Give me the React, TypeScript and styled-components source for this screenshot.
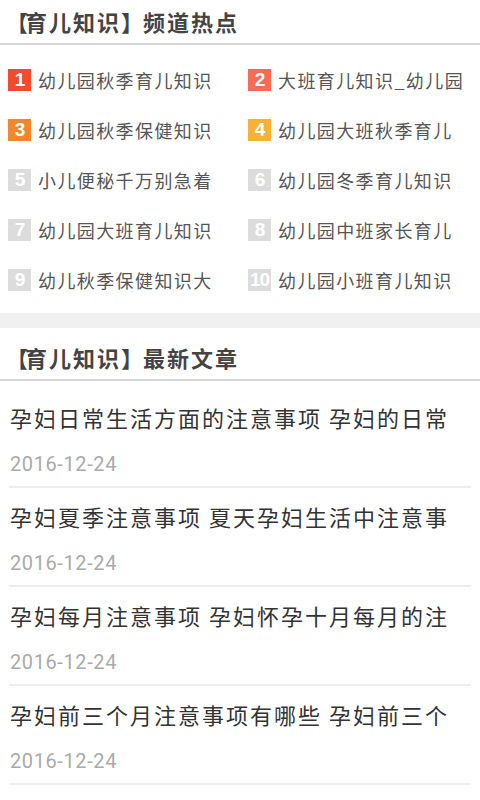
import React from "react";
import styled, { createGlobalStyle } from "styled-components";

const hotItems = [
  "幼儿园秋季育儿知识",
  "大班育儿知识_幼儿园",
  "幼儿园秋季保健知识",
  "幼儿园大班秋季育儿",
  "小儿便秘千万别急着",
  "幼儿园冬季育儿知识",
  "幼儿园大班育儿知识",
  "幼儿园中班家长育儿",
  "幼儿秋季保健知识大",
  "幼儿园小班育儿知识",
];

const articles = [
  { title: "孕妇日常生活方面的注意事项 孕妇的日常", date: "2016-12-24" },
  { title: "孕妇夏季注意事项 夏天孕妇生活中注意事", date: "2016-12-24" },
  { title: "孕妇每月注意事项 孕妇怀孕十月每月的注", date: "2016-12-24" },
  { title: "孕妇前三个月注意事项有哪些 孕妇前三个", date: "2016-12-24" },
];

const badgeColors = ["#f04a2f", "#fa6b55", "#f3862d", "#f5b236"];

const GlobalStyle = createGlobalStyle`
  body {
    margin: 0;
    background: #fff;
    font-family: Roboto, "Noto Sans CJK SC", sans-serif;
  }
`;

const Page = styled.div`
  width: 480px;
  overflow: hidden;
`;

const SectionHeader = styled.h2<{ $top: number }>`
  margin: 0;
  padding: ${(p) => p.$top}px 0 0 0;
  height: 43px;
  line-height: 42px;
  font-family: "Noto Sans CJK SC", sans-serif;
  font-size: 22px;
  font-weight: 700;
  letter-spacing: 2px;
  color: #444;
  border-bottom: 2px solid #d6d6d6;
`;

// the opening bracket sits a little in from the edge, with air before the word
const Bracket = styled.span<{ $open?: boolean }>`
  margin-left: ${(p) => (p.$open ? 6 : 0)}px;
  letter-spacing: ${(p) => (p.$open ? -3 : 0)}px;
`;

const HotGrid = styled.ul`
  list-style: none;
  margin: 0;
  padding: 10px 0 8px 8px;
  display: grid;
  grid-template-columns: 240px 232px;
`;

const HotRow = styled.li`
  height: 50px;
  display: flex;
  align-items: center;
  white-space: nowrap;
  overflow: hidden;
`;

const Badge = styled.span<{ $color: string }>`
  flex: none;
  width: 23px;
  height: 22px;
  margin-right: 7px;
  background: ${(p) => p.$color};
  color: #fff;
  font-family: "Liberation Sans", Arial, sans-serif;
  font-size: 19px;
  font-weight: 700;
  line-height: 22px;
  letter-spacing: -1px;
  text-align: center;
`;

const HotText = styled.span`
  font-family: "Noto Sans CJK SC", sans-serif;
  font-size: 18px;
  letter-spacing: 1.4px;
  color: #555;
`;

const Band = styled.div`
  height: 15px;
  background: #f0f0f0;
`;

const ArticleList = styled.ul`
  list-style: none;
  margin: 0;
  padding: 8px 9px 0;
`;

const Article = styled.li`
  padding: 8px 0 7px 1px;
  border-bottom: 2px solid #eee;
`;

const ArticleTitle = styled.div`
  height: 40px;
  line-height: 40px;
  font-family: "Noto Sans CJK SC", sans-serif;
  font-size: 22px;
  letter-spacing: 2px;
  color: #333;
  white-space: nowrap;
  overflow: hidden;
`;

const ArticleDate = styled.div`
  margin-top: 12px;
  height: 30px;
  line-height: 30px;
  font-family: Roboto, sans-serif;
  font-size: 20px;
  letter-spacing: 0.6px;
  color: #aaa;
`;

const Heading = ({ top, name }: { top: number; name: string }) => (
  <SectionHeader $top={top}>
    <Bracket $open>【</Bracket>育儿知识<Bracket>】</Bracket>
    {name}
  </SectionHeader>
);

export default function App() {
  return (
    <Page>
      <GlobalStyle />
      <Heading top={0} name="频道热点" />
      <HotGrid>
        {hotItems.map((text, i) => (
          <HotRow key={i}>
            <Badge $color={badgeColors[i] ?? "#dcdcdc"}>{i + 1}</Badge>
            <HotText>{text}</HotText>
          </HotRow>
        ))}
      </HotGrid>
      <Band />
      <Heading top={8} name="最新文章" />
      <ArticleList>
        {articles.map((a, i) => (
          <Article key={i}>
            <ArticleTitle>{a.title}</ArticleTitle>
            <ArticleDate>{a.date}</ArticleDate>
          </Article>
        ))}
      </ArticleList>
    </Page>
  );
}
